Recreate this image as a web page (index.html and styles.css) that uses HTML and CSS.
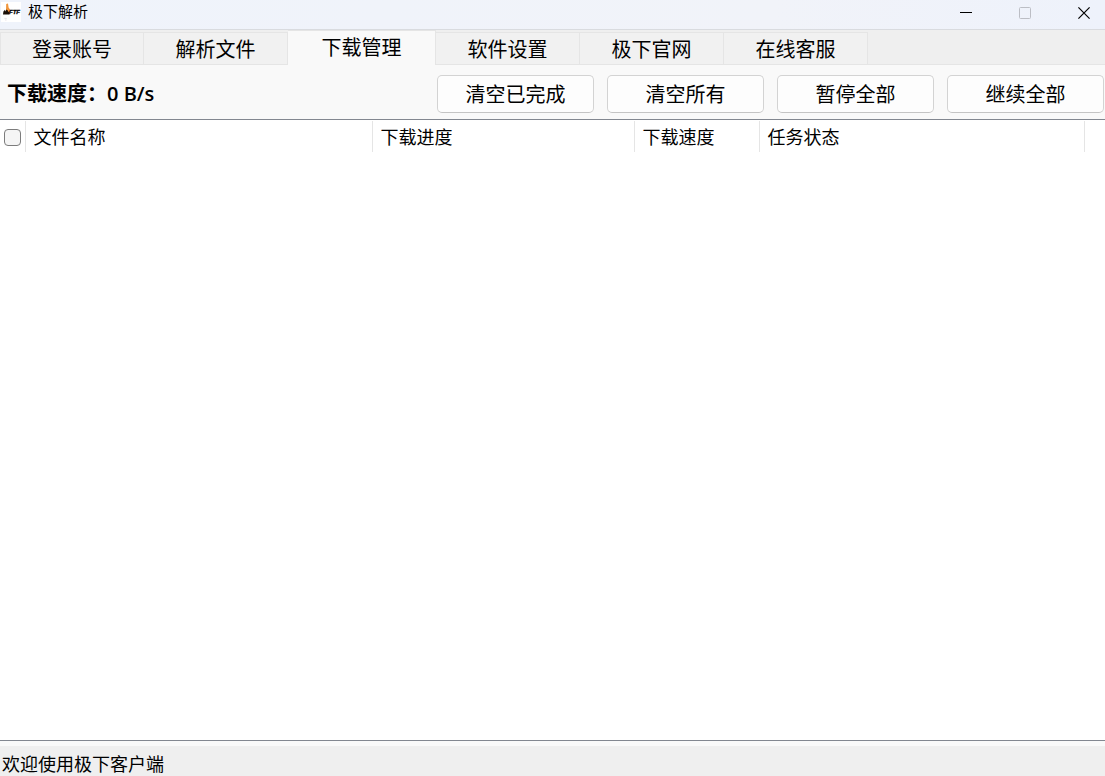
FILE: index.html
```html
<!DOCTYPE html>
<html lang="zh-CN">
<head>
  <meta charset="UTF-8">
  <meta name="viewport" content="width=device-width, initial-scale=1">
  <title>极下解析</title>
  <link rel="stylesheet" href="styles.css">
</head>
<body>

  <!-- 标题栏 -->
  <header class="titlebar">
    <svg class="logo" viewBox="0 0 20 20" aria-hidden="true">
      <rect width="20" height="20" fill="#ffffff"/>
      <path d="M5.2 2 L7 1.4 L7.6 5.4 L9 7.6 L8.4 11 L5.6 11.6 L5 8 Z" fill="#f0953c"/>
      <path d="M2 12.6 L2.4 9.4 L4 7.8 L4.6 9.4 L5.4 7.4 L6.8 8.4 L7.4 10 L8.6 9 L8.2 12.6 Z" fill="#1a1008"/>
      <text x="8" y="12" class="logo-text">FTF</text>
      <path d="M3.4 16.4 h2.4 M4 18 h1.6" stroke="#e9e4e8" fill="none"/>
    </svg>
    <h1 class="title">极下解析</h1>
    <div class="window-controls">
      <button type="button" aria-label="最小化">
        <svg viewBox="0 0 12 12"><path d="M0 5.5 H12" stroke="#000000"/></svg>
      </button>
      <button type="button" aria-label="最大化" disabled>
        <svg viewBox="0 0 12 12"><rect x="0.5" y="0.5" width="11" height="11" rx="1" stroke="#bcbec5"/></svg>
      </button>
      <button type="button" aria-label="关闭">
        <svg viewBox="0 0 12 12"><path d="M0.4 0.4 L11.6 11.6 M11.6 0.4 L0.4 11.6" stroke="#000000" stroke-width="1.2"/></svg>
      </button>
    </div>
  </header>

  <!-- 选项卡 -->
  <nav class="tabs" role="tablist">
    <button type="button" role="tab" class="tab">登录账号</button>
    <button type="button" role="tab" class="tab">解析文件</button>
    <button type="button" role="tab" class="tab active" aria-selected="true">下载管理</button>
    <button type="button" role="tab" class="tab">软件设置</button>
    <button type="button" role="tab" class="tab">极下官网</button>
    <button type="button" role="tab" class="tab">在线客服</button>
  </nav>

  <!-- 下载速度和操作按钮 -->
  <section class="toolbar">
    <p class="speed">下载速度：0 B/s</p>
    <div class="actions">
      <button type="button" class="action-btn">清空已完成</button>
      <button type="button" class="action-btn">清空所有</button>
      <button type="button" class="action-btn">暂停全部</button>
      <button type="button" class="action-btn">继续全部</button>
    </div>
  </section>

  <!-- 下载列表 -->
  <main class="list">
    <table>
      <colgroup>
        <col class="col-check">
        <col class="col-name">
        <col class="col-progress">
        <col class="col-speed">
        <col class="col-status">
        <col>
      </colgroup>
      <thead>
        <tr>
          <th class="check"><input type="checkbox" aria-label="全选"></th>
          <th>文件名称</th>
          <th>下载进度</th>
          <th>下载速度</th>
          <th>任务状态</th>
          <th class="rest"></th>
        </tr>
      </thead>
      <tbody></tbody>
    </table>
  </main>

  <footer class="statusbar">欢迎使用极下客户端</footer>

</body>
</html>
```
FILE: styles.css
```css
* {
  box-sizing: border-box;
}

body {
  margin: 0;
  min-height: 100vh;
  display: flex;
  flex-direction: column;
  background: #f9f9f9;
  color: #000000;
  font-family: "Open Sans", "Noto Sans CJK SC", sans-serif;
  font-size: 18px;
}

button {
  padding: 0;
  border: none;
  background: none;
  color: inherit;
  font-family: inherit;
  font-size: 20px;
  line-height: 28px;
}

/* 标题栏 */
.titlebar {
  display: flex;
  align-items: flex-start;
  height: 30px;
  padding: 1px 1px 0;
  background: linear-gradient(90deg, #eff3fb, #f1f3f9 70%, #eef2fb);
  border-bottom: 1px solid #d9dbdf;
}

.logo {
  width: 20px;
  height: 20px;
  margin-top: 1px;
}

.logo-text {
  font-family: "Liberation Sans", sans-serif;
  font-size: 6px;
  font-weight: bold;
  font-style: italic;
  stroke: #000000;
  stroke-width: 0.3;
}

.title {
  margin: 0 0 0 7px;
  font-size: 15px;
  font-weight: normal;
  line-height: 20px;
}

.window-controls {
  display: flex;
  gap: 19px;
  margin-left: auto;
}

.window-controls button {
  display: flex;
  align-items: center;
  justify-content: center;
  width: 40px;
  height: 24px;
}

.window-controls svg {
  width: 12px;
  height: 12px;
  fill: none;
}

/* 选项卡 */
.tabs {
  display: flex;
  height: 35px;
  background: #efefef;
  border-bottom: 1px solid #e5e5e5;
}

.tab {
  width: 144px;
  margin-top: 2px;
  padding-top: 3px;
  background: #f1f1f1;
  border-top: 1px solid #e5e5e5;
  border-right: 1px solid #e5e5e5;
}

.tab:first-child {
  border-left: 1px solid #e5e5e5;
}

.tab.active {
  width: 148px;
  margin: 0 0 -1px;
  padding: 0 0 1px;
  background: #f9f9f9;
}

/* 工具栏 */
.toolbar {
  display: flex;
  align-items: center;
  justify-content: space-between;
  height: 55px;
  padding: 4px 1px 0 7px;
  border-bottom: 1px solid #828790;
}

.speed {
  margin: 0;
  font-size: 20px;
  font-weight: 600;
  line-height: 28px;
}

.actions {
  display: flex;
  gap: 13px;
}

.action-btn {
  width: 157px;
  height: 38px;
  padding-top: 2px;
  background: #fdfdfd;
  border: 1px solid #d3d3d3;
  border-bottom-color: #c4c4c4;
  border-radius: 5px;
}

/* 列表 */
.list {
  flex: 1;
  background: #ffffff;
  border-bottom: 1px solid #828790;
}

table {
  width: 100%;
  table-layout: fixed;
  border-collapse: collapse;
  margin-top: 1px;
}

.col-check {
  width: 25px;
}

.col-name {
  width: 347px;
}

.col-progress {
  width: 262px;
}

.col-speed {
  width: 125px;
}

.col-status {
  width: 325px;
}

th {
  height: 31px;
  padding: 1px 8px 0;
  border-right: 1px solid #e5e5e5;
  font-weight: normal;
  line-height: 24px;
  text-align: left;
}

.check {
  padding: 2px 4px 0;
}

.rest {
  border-right: none;
}

.check input {
  display: block;
  appearance: none;
  width: 17px;
  height: 17px;
  margin: 0;
  background: #f5f5f5;
  border: 1px solid #7c7c7c;
  border-radius: 4px;
}

/* 状态栏 */
.statusbar {
  height: 35px;
  padding: 6px 2px 0;
  background: #efefef;
  border-top: 5px solid #f9f9f9;
  line-height: 24px;
}
```
